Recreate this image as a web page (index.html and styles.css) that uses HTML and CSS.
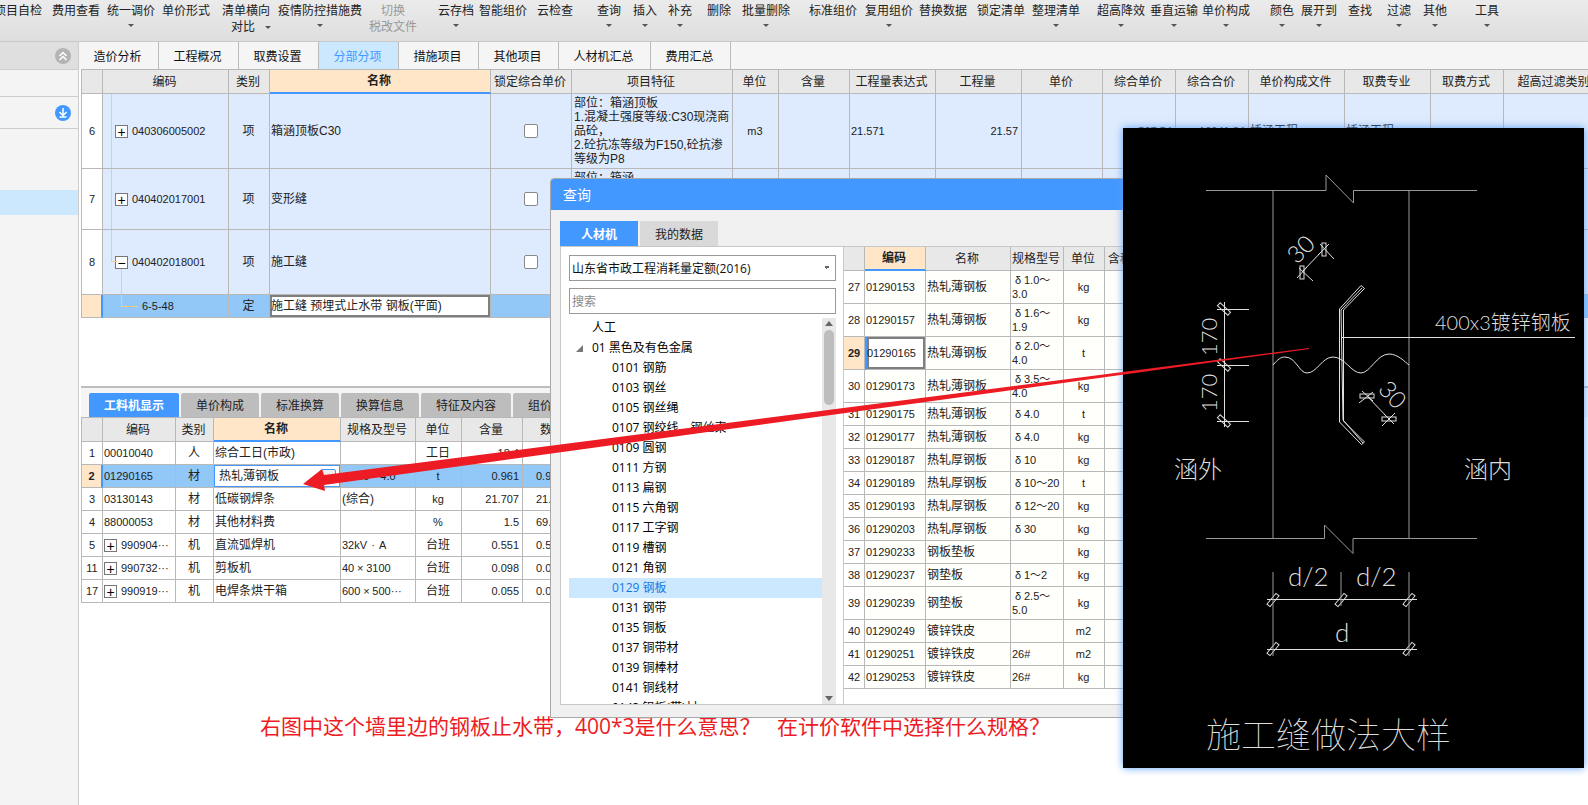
FILE: index.html
```html
<!DOCTYPE html>
<html lang="zh-CN">
<head>
    <meta charset="UTF-8">
    <meta name="viewport" content="width=device-width, initial-scale=1.0">
    <title>分部分项</title>
    <link rel="stylesheet" href="styles.css">
</head>
<body>

    <header class="toolbar">
        <button>项目自检</button>
        <button>费用查看</button>
        <button class="drop">统一调价</button>
        <button>单价形式</button>
        <button class="drop-side">清单横向<br><span>对比</span></button>
        <button class="drop">疫情防控措施费</button>
        <button disabled>切换<br>税改文件</button>
        <button class="drop">云存档</button>
        <button>智能组价</button>
        <button>云检查</button>
        <button class="drop">查询</button>
        <button class="drop">插入</button>
        <button class="drop">补充</button>
        <button>删除</button>
        <button class="drop">批量删除</button>
        <button>标准组价</button>
        <button class="drop">复用组价</button>
        <button>替换数据</button>
        <button>锁定清单</button>
        <button class="drop">整理清单</button>
        <button class="drop">超高降效</button>
        <button class="drop">垂直运输</button>
        <button class="drop">单价构成</button>
        <button class="drop">颜色</button>
        <button class="drop">展开到</button>
        <button>查找</button>
        <button class="drop">过滤</button>
        <button class="drop">其他</button>
        <button class="drop">工具</button>
    </header>

    <div class="main">
        <aside class="sidebar">
            <div class="side-head">
                <button class="round" aria-label="收起">
                    <svg width="16" height="16" viewBox="0 0 16 16"><circle cx="8" cy="8" r="8" fill="#b4b4b4"/><path d="M4.500 8L8 4.500L11.500 8M4.500 12L8 8.500L11.500 12" fill="none" stroke="#fff" stroke-width="1.500"/></svg>
                </button>
            </div>
            <div class="side-blank"></div>
            <div class="side-load">
                <button class="round" aria-label="下载">
                    <svg width="16" height="16" viewBox="0 0 16 16"><circle cx="8" cy="8" r="8" fill="#4398ff"/><path d="M8 3V10M4.500 7L8 10.500L11.500 7M4.500 12H11.500" fill="none" stroke="#fff" stroke-width="1.500"/></svg>
                </button>
            </div>
            <div class="side-current"></div>
        </aside>

        <div class="content">
            <nav class="tabs">
                <button>造价分析</button>
                <button>工程概况</button>
                <button>取费设置</button>
                <button class="active">分部分项</button>
                <button>措施项目</button>
                <button>其他项目</button>
                <button class="wide">人材机汇总</button>
                <button>费用汇总</button>
            </nav>

            <div class="bill">
                <table class="grid bill-grid">
                    <colgroup>
                        <col class="w21"><col class="w126"><col class="w41"><col class="w221"><col class="w81"><col class="w161">
                        <col class="w46"><col class="w71"><col class="w86"><col class="w86"><col class="w81"><col class="w73">
                        <col class="w73"><col class="w96"><col class="w86"><col class="w73"><col class="w102">
                    </colgroup>
                    <thead>
                        <tr>
                            <th></th><th>编码</th><th>类别</th><th class="picked">名称</th><th>锁定综合单价</th><th>项目特征</th>
                            <th>单位</th><th>含量</th><th>工程量表达式</th><th>工程量</th><th>单价</th><th>综合单价</th>
                            <th>综合合价</th><th>单价构成文件</th><th>取费专业</th><th>取费方式</th><th>超高过滤类别</th>
                        </tr>
                    </thead>
                    <tbody>
                        <tr class="row6">
                            <td class="no">6</td>
                            <td class="num tree"><button class="exp" aria-label="展开">+</button>040306005002</td>
                            <td class="mid">项</td>
                            <td>箱涵顶板C30</td>
                            <td class="mid"><input type="checkbox" aria-label="锁定综合单价"></td>
                            <td class="feature">部位：箱涵顶板<br>1.混凝土强度等级:C30现浇商<br>品砼，<br>2.砼抗冻等级为F150,砼抗渗<br>等级为P8</td>
                            <td class="mid num">m3</td>
                            <td></td>
                            <td class="num">21.571</td>
                            <td class="num end">21.57</td>
                            <td></td>
                            <td class="num end">507.54</td>
                            <td class="num end">10941.34</td>
                            <td>桥涵工程</td>
                            <td>桥涵工程</td>
                            <td></td>
                            <td></td>
                        </tr>
                        <tr class="row7">
                            <td class="no">7</td>
                            <td class="num tree"><button class="exp" aria-label="展开">+</button>040402017001</td>
                            <td class="mid">项</td>
                            <td>变形缝</td>
                            <td class="mid"><input type="checkbox" aria-label="锁定综合单价"></td>
                            <td class="feature">部位：箱涵</td>
                            <td></td><td></td><td></td><td></td><td></td><td></td><td></td><td></td><td></td><td></td><td></td>
                        </tr>
                        <tr class="row8">
                            <td class="no">8</td>
                            <td class="num tree last"><button class="exp" aria-label="收起">−</button>040402018001</td>
                            <td class="mid">项</td>
                            <td>施工缝</td>
                            <td class="mid"><input type="checkbox" aria-label="锁定综合单价"></td>
                            <td></td><td></td><td></td><td></td><td></td><td></td><td></td><td></td><td></td><td></td><td></td><td></td>
                        </tr>
                        <tr class="current">
                            <td class="no"></td>
                            <td class="num child">6-5-48</td>
                            <td class="mid">定</td>
                            <td class="cell-focus">施工缝 预埋式止水带 钢板(平面)</td>
                            <td></td><td></td><td></td><td></td><td></td><td></td><td></td><td></td><td></td><td></td><td></td><td></td><td></td>
                        </tr>
                    </tbody>
                </table>
            </div>

            <nav class="subtabs">
                <button class="active wide">工料机显示</button>
                <button>单价构成</button>
                <button>标准换算</button>
                <button>换算信息</button>
                <button class="wide">特征及内容</button>
                <button>组价方案</button>
            </nav>

            <table class="grid detail-grid">
                <colgroup>
                    <col class="w21"><col class="w73"><col class="w38"><col class="w127"><col class="w75"><col class="w46"><col class="w61"><col class="w61">
                </colgroup>
                <thead>
                    <tr><th></th><th>编码</th><th>类别</th><th class="picked">名称</th><th>规格及型号</th><th>单位</th><th>含量</th><th>数量</th></tr>
                </thead>
                <tbody>
                    <tr><td class="no">1</td><td class="num">00010040</td><td class="mid">人</td><td>综合工日(市政)</td><td></td><td class="mid">工日</td><td class="num end">18.4</td><td></td></tr>
                    <tr class="current"><td class="no">2</td><td class="num">01290165</td><td class="mid">材</td><td class="editing"><div class="editor">热轧薄钢板<button aria-label="更多">···</button></div></td><td class="num"><span class="sym">δ</span>2.0～4.0</td><td class="mid num">t</td><td class="num end">0.961</td><td class="num qty">0.961</td></tr>
                    <tr><td class="no">3</td><td class="num">03130143</td><td class="mid">材</td><td>低碳钢焊条</td><td>(综合)</td><td class="mid num">kg</td><td class="num end">21.707</td><td class="num qty">21.707</td></tr>
                    <tr><td class="no">4</td><td class="num">88000053</td><td class="mid">材</td><td>其他材料费</td><td></td><td class="mid num">%</td><td class="num end">1.5</td><td class="num qty">69.</td></tr>
                    <tr><td class="no">5</td><td class="num"><button class="exp" aria-label="展开">+</button>990904···</td><td class="mid">机</td><td>直流弧焊机</td><td class="num">32kV<span class="sym">·</span>A</td><td class="mid">台班</td><td class="num end">0.551</td><td class="num qty">0.551</td></tr>
                    <tr><td class="no">11</td><td class="num"><button class="exp" aria-label="展开">+</button>990732···</td><td class="mid">机</td><td>剪板机</td><td class="num">40<span class="sym">×</span>3100</td><td class="mid">台班</td><td class="num end">0.098</td><td class="num qty">0.098</td></tr>
                    <tr><td class="no">17</td><td class="num"><button class="exp" aria-label="展开">+</button>990919···</td><td class="mid">机</td><td>电焊条烘干箱</td><td class="num">600<span class="sym">×</span>500···</td><td class="mid">台班</td><td class="num end">0.055</td><td class="num qty">0.055</td></tr>
                </tbody>
            </table>
        </div>
    </div>

    <p class="note">右图中这个墙里边的钢板止水带，400*3是什么意思？&nbsp;&nbsp; 在计价软件中选择什么规格？</p>

    <section class="dialog">
        <h2>查询</h2>
        <nav class="dialog-tabs">
            <button class="active">人材机</button>
            <button>我的数据</button>
        </nav>
        <div class="panes">
            <div class="pane-left">
                <select aria-label="定额库"><option>山东省市政工程消耗量定额(2016)</option></select>
                <input type="text" placeholder="搜索" aria-label="搜索">
                <div class="tree-box">
                    <ul>
                        <li class="lv1">人工</li>
                        <li class="lv1 open">01 黑色及有色金属</li>
                        <li>0101 钢筋</li>
                        <li>0103 钢丝</li>
                        <li>0105 钢丝绳</li>
                        <li>0107 钢绞线、钢丝束</li>
                        <li>0109 圆钢</li>
                        <li>0111 方钢</li>
                        <li>0113 扁钢</li>
                        <li>0115 六角钢</li>
                        <li>0117 工字钢</li>
                        <li>0119 槽钢</li>
                        <li>0121 角钢</li>
                        <li class="selected">0129 钢板</li>
                        <li>0131 钢带</li>
                        <li>0135 铜板</li>
                        <li>0137 铜带材</li>
                        <li>0139 铜棒材</li>
                        <li>0141 铜线材</li>
                        <li>0143 铝板(带)材</li>
                    </ul>
                    <div class="scroll"><i class="up"></i><b></b><i class="down"></i></div>
                </div>
            </div>
            <div class="pane-right">
                <table class="grid query-grid">
                    <colgroup>
                        <col class="w21"><col class="w61"><col class="w85"><col class="w53"><col class="w41"><col class="w73">
                    </colgroup>
                    <thead>
                        <tr><th></th><th class="picked">编码</th><th>名称</th><th>规格型号</th><th>单位</th><th class="left">含税市场价</th></tr>
                    </thead>
                    <tbody>
                        <tr class="tall"><td class="no">27</td><td class="num">01290153</td><td>热轧薄钢板</td><td class="num"><span class="sym">δ</span>1.0～<br>3.0</td><td class="mid num">kg</td><td></td></tr>
                        <tr class="tall"><td class="no">28</td><td class="num">01290157</td><td>热轧薄钢板</td><td class="num"><span class="sym">δ</span>1.6～<br>1.9</td><td class="mid num">kg</td><td></td></tr>
                        <tr class="tall"><td class="no hot">29</td><td class="num cell-focus blue-left">01290165</td><td>热轧薄钢板</td><td class="num"><span class="sym">δ</span>2.0～<br>4.0</td><td class="mid num">t</td><td></td></tr>
                        <tr class="tall"><td class="no">30</td><td class="num">01290173</td><td>热轧薄钢板</td><td class="num"><span class="sym">δ</span>3.5～<br>4.0</td><td class="mid num">kg</td><td></td></tr>
                        <tr><td class="no">31</td><td class="num">01290175</td><td>热轧薄钢板</td><td class="num"><span class="sym">δ</span>4.0</td><td class="mid num">t</td><td></td></tr>
                        <tr><td class="no">32</td><td class="num">01290177</td><td>热轧薄钢板</td><td class="num"><span class="sym">δ</span>4.0</td><td class="mid num">kg</td><td></td></tr>
                        <tr><td class="no">33</td><td class="num">01290187</td><td>热轧厚钢板</td><td class="num"><span class="sym">δ</span>10</td><td class="mid num">kg</td><td></td></tr>
                        <tr><td class="no">34</td><td class="num">01290189</td><td>热轧厚钢板</td><td class="num"><span class="sym">δ</span>10～20</td><td class="mid num">t</td><td></td></tr>
                        <tr><td class="no">35</td><td class="num">01290193</td><td>热轧厚钢板</td><td class="num"><span class="sym">δ</span>12～20</td><td class="mid num">kg</td><td></td></tr>
                        <tr><td class="no">36</td><td class="num">01290203</td><td>热轧厚钢板</td><td class="num"><span class="sym">δ</span>30</td><td class="mid num">kg</td><td></td></tr>
                        <tr><td class="no">37</td><td class="num">01290233</td><td>钢板垫板</td><td></td><td class="mid num">kg</td><td></td></tr>
                        <tr><td class="no">38</td><td class="num">01290237</td><td>钢垫板</td><td class="num"><span class="sym">δ</span>1～2</td><td class="mid num">kg</td><td></td></tr>
                        <tr class="tall"><td class="no">39</td><td class="num">01290239</td><td>钢垫板</td><td class="num"><span class="sym">δ</span>2.5～<br>5.0</td><td class="mid num">kg</td><td></td></tr>
                        <tr><td class="no">40</td><td class="num">01290249</td><td>镀锌铁皮</td><td></td><td class="mid num">m2</td><td></td></tr>
                        <tr><td class="no">41</td><td class="num">01290251</td><td>镀锌铁皮</td><td class="num">26#</td><td class="mid num">m2</td><td></td></tr>
                        <tr><td class="no">42</td><td class="num">01290253</td><td>镀锌铁皮</td><td class="num">26#</td><td class="mid num">kg</td><td></td></tr>
                    </tbody>
                </table>
            </div>
        </div>
    </section>

    <figure class="drawing">
        <svg width="461" height="640" viewBox="0 0 461 640">
            <!-- 墙体轮廓 -->
            <g class="wall">
                <path d="M83 62.500H203V47L230.500 75V62.500H354"/>
                <path d="M83 410.500H201.500V397L230 425.500V410.500H354"/>
                <path d="M150 62V410M286 62V410"/>
            </g>
            <!-- 止水钢板 -->
            <g class="line">
                <path d="M216.500 181L238 157.500L241.500 160.500L220.500 182V293L241.500 314L238.500 316.500L216.500 294Z"/>
                <path d="M218 182L239 160M218 182L220 292L240 315"/>
                <path d="M219 209.500H452"/>
                <path d="M150 237C155 231 158 229 162 229C173 229 176 245 184 245C194 245 199 229 210 229C222 229 228 245 238 245C247 245 254 226 266 226C275 226 282 234 286 237"/>
            </g>
            <!-- 170 + 170 -->
            <g class="line">
                <path d="M101.500 174V299M94 181.500H126M94 237.500H126M94 293.500H126"/>
                <rect x="94" y="179" width="14" height="4" transform="rotate(42 101 181)"/>
                <rect x="94" y="235" width="14" height="4" transform="rotate(42 101 237)"/>
                <rect x="94" y="291" width="14" height="4" transform="rotate(42 101 293)"/>
            </g>
            <!-- 弯折 30 -->
            <g class="line">
                <path d="M179 144L201 121M176 140L190 153M197 116L211 131M174 150L184 139M195 127L206 116"/>
                <rect x="177" y="138" width="4" height="13"/>
                <rect x="199" y="115" width="4" height="13"/>
                <path d="M244 268L266 291M236 275L250 264M259 298L272 285M239 263L250 273M261 286L271 296"/>
                <rect x="237" y="266" width="14" height="4"/>
                <rect x="259" y="289" width="14" height="4"/>
            </g>
            <!-- 墙厚标注 -->
            <g class="line">
                <path d="M144 471.500H294M144 521.500H294"/>
                <rect x="143" y="470" width="14" height="4" transform="rotate(-50 150 472)"/>
                <rect x="211" y="470" width="14" height="4" transform="rotate(-50 218 472)"/>
                <rect x="279" y="470" width="14" height="4" transform="rotate(-50 286 472)"/>
                <rect x="143" y="519" width="14" height="4" transform="rotate(-50 150 521)"/>
                <rect x="279" y="519" width="14" height="4" transform="rotate(-50 286 521)"/>
            </g>
            <path class="wall" d="M150 444V528M286 444V528M218 444V478"/>
            <g class="label">
                <text class="t22" transform="translate(94 228) rotate(-90)">170</text>
                <text class="t22" transform="translate(94 284) rotate(-90)">170</text>
                <text class="t24" transform="translate(174 137) rotate(-45)">30</text>
                <text class="t24" transform="translate(254 262) rotate(48)">30</text>
                <text class="t20" x="312" y="202">400x3镀锌钢板</text>
                <text class="t24" x="51" y="350">涵外</text>
                <text class="t24" x="341" y="350">涵内</text>
                <text class="t26" x="165" y="458">d/2</text>
                <text class="t26" x="233" y="458">d/2</text>
                <text class="t26" x="212" y="514">d</text>
                <text class="t35" x="83" y="620">施工缝做法大样</text>
            </g>
        </svg>
    </figure>

    <svg class="pointer" width="1010" height="145" viewBox="0 0 1010 145">
        <path d="M3 137L22 122L24 128L1009 1V2L24 138L25 144Z" fill="#ed1c24"/>
    </svg>

</body>
</html>
```
FILE: styles.css
```css
* {
    box-sizing: border-box;
}
body {
    margin: 0;
    min-height: 100vh;
    display: flex;
    flex-direction: column;
    position: relative;
    overflow: hidden;
    background: #fff;
    color: #222;
    font-family: "Open Sans", "Noto Sans CJK SC", sans-serif;
    font-size: 12px;
}
button {
    margin: 0;
    padding: 0;
    border: none;
    background: none;
    color: inherit;
    font: inherit;
    white-space: nowrap;
}

/* 工具栏 */
.toolbar {
    display: grid;
    grid-template-columns: 58px 55px 55px 60px 56px 91px 69px 41px 58px 60px 36px 35px 39px 35px 67px 56px 54px 58px 55px 65px 53px 52px 68px 31px 47px 39px 36px 52px 24px;
    justify-items: start;
    align-items: start;
    height: 42px;
    padding-top: 3px;
    background: linear-gradient(#ebebeb, #dedede);
    border-bottom: 1px solid #c8c8c8;
}
.toolbar button {
    position: relative;
    margin-left: -6px;
    line-height: 16px;
}
.toolbar button:disabled {
    color: #999;
}
.drop::after, .drop-side::after {
    content: "";
    display: block;
    width: 0;
    margin: 5px auto 0;
    border: 3px solid transparent;
    border-top-color: #555;
    border-bottom: none;
}
.drop-side span {
    margin-right: 6px;
}
.drop-side::after {
    position: absolute;
    right: -1px;
    bottom: 6px;
}

.main {
    flex: 1;
    display: flex;
}

/* 左侧栏 */
.sidebar {
    width: 79px;
    flex: none;
    background: #f4f4f4;
    border-right: 1px solid #ccc;
}
.side-head, .side-load {
    display: flex;
    align-items: center;
    justify-content: flex-end;
    padding-right: 7px;
}
.side-head {
    height: 28px;
    background: #dfdfdf;
    border-bottom: 1px solid #d0d0d0;
}
.side-blank {
    height: 27px;
    border-bottom: 1px solid #ccc;
}
.side-load {
    height: 32px;
    border-bottom: 1px solid #ccc;
}
.side-current {
    height: 25px;
    margin-top: 61px;
    background: #cce8ff;
}
.round {
    width: 16px;
    height: 16px;
    line-height: 0;
}

/* 主内容 */
.content {
    flex: 1;
    min-width: 0;
    padding-left: 2px;
    overflow: hidden;
}
.tabs {
    display: flex;
    height: 27px;
    margin-left: -2px;
    background: #f5f5f5;
}
.tabs button {
    width: 80px;
    padding-right: 2px;
    border-right: 1px solid #bbb;
    color: #111;
}
.tabs .wide {
    width: 92px;
}
.tabs .active {
    background: #cce8ff;
    color: #4398ff;
}
.bill {
    height: 319px;
    overflow: hidden;
    border-bottom: 2px solid #bdbdbd;
}

/* 表格 */
.grid {
    table-layout: fixed;
    border-collapse: separate;
    border-spacing: 0;
    width: 0;
    border-top: 1px solid #b8b8b8;
    border-left: 1px solid #b8b8b8;
    font-family: "Liberation Sans", "Noto Sans CJK SC", sans-serif;
    line-height: 14px;
}
.grid th {
    height: 24px;
    padding: 0 2px 0 0;
    background: #e8e8e8;
    border-right: 1px solid #b8b8b8;
    border-bottom: 1px solid #b8b8b8;
    font-weight: normal;
    white-space: nowrap;
    overflow: hidden;
}
.grid td {
    height: 23px;
    padding: 0 2px 0 1px;
    border-right: 1px solid #b8b8b8;
    border-bottom: 1px solid #b8b8b8;
    white-space: nowrap;
    overflow: hidden;
}
.grid .picked {
    background: #ffe6c8;
    border-bottom: 2px solid #4398ff;
    font-weight: bold;
}
.grid .left {
    padding-left: 3px;
    text-align: left;
}
.grid .no {
    padding: 0;
    background: #fff;
    font-size: 11px;
    text-align: center;
}
.grid .num {
    font-size: 11px;
}
.grid .mid {
    text-align: center;
}
.grid .end {
    padding-right: 3px;
    text-align: right;
}
.grid .qty {
    padding-left: 13px;
}
.sym {
    display: inline-block;
    width: 12px;
    text-align: center;
}
.w21 { width: 21px; }
.w38 { width: 38px; }
.w41 { width: 41px; }
.w46 { width: 46px; }
.w53 { width: 53px; }
.w61 { width: 61px; }
.w71 { width: 71px; }
.w73 { width: 73px; }
.w75 { width: 75px; }
.w81 { width: 81px; }
.w85 { width: 85px; }
.w86 { width: 86px; }
.w96 { width: 96px; }
.w102 { width: 102px; }
.w126 { width: 126px; }
.w127 { width: 127px; }
.w161 { width: 161px; }
.w221 { width: 221px; }

.bill-grid td {
    background: #deeafd;
}
.bill-grid .row6 td { height: 75px; }
.bill-grid .row7 td { height: 61px; }
.bill-grid .row8 td { height: 65px; }
.grid .current td {
    background: #91c8f8;
}
.grid .current .no {
    background: #ffe6c8;
    border-right: 2px solid #4398ff;
    font-weight: bold;
}
.grid .current .cell-focus,
.grid td.cell-focus {
    background: #fff;
    box-shadow: inset 0 0 0 2px #7f7f7f;
}
.grid td.blue-left {
    border-left: 2px solid #4398ff;
    padding-left: 0;
}
.grid .hot {
    background: #ffe6c8;
    font-weight: bold;
}
.bill-grid .feature {
    padding-top: 2px;
    padding-left: 2px;
    vertical-align: top;
}

/* 编码树连线 */
.grid .tree {
    position: relative;
    padding-left: 12px;
}
.tree::before {
    content: "";
    position: absolute;
    left: 8px;
    top: 0;
    bottom: -1px;
    border-left: 1px solid #fbc987;
}
.tree.last::before {
    bottom: 50%;
    width: 5px;
    border-bottom: 1px solid #fbc987;
}
.tree.last::after {
    content: "";
    position: absolute;
    left: 18px;
    top: 39px;
    bottom: -1px;
    border-left: 1px solid #fbc987;
}
.grid .child {
    position: relative;
    padding-left: 39px;
}
.child::before {
    content: "";
    position: absolute;
    left: 18px;
    top: 0;
    width: 16px;
    height: 11px;
    border-left: 1px solid #fbc987;
    border-bottom: 1px solid #fbc987;
}
.exp {
    width: 13px;
    height: 13px;
    margin-right: 4px;
    border: 1px solid #777;
    background: #fff;
    color: #000;
    font-size: 14px;
    line-height: 10px;
    vertical-align: -2px;
}
.grid input {
    appearance: none;
    width: 14px;
    height: 14px;
    margin: 0;
    border: 1px solid #888;
    border-radius: 2px;
    background: #fff;
    vertical-align: middle;
}

/* 工料机 */
.subtabs {
    display: flex;
    gap: 2px;
    height: 29px;
    padding: 5px 0 0 8px;
    background: #f5f5f5;
}
.subtabs button {
    width: 78px;
    height: 24px;
    border-radius: 2px 2px 0 0;
    background: #bdbdbd;
}
.subtabs .wide {
    width: 90px;
}
.subtabs .active {
    background: #4398ff;
    color: #fff;
    font-weight: bold;
}
.grid .editing {
    padding: 0;
}
.editor {
    display: flex;
    justify-content: space-between;
    height: 22px;
    padding: 3px 3px 0 4px;
    border: 1px solid #4398ff;
    background: #fff;
}
.editor button {
    width: 15px;
    height: 12px;
    border: 1px solid #4398ff;
    border-radius: 2px;
    background: #eee;
    line-height: 8px;
}

.note {
    position: absolute;
    left: 260px;
    top: 711px;
    margin: 0;
    color: #ed1c24;
    font-size: 21px;
    line-height: 30px;
    white-space: nowrap;
}

/* 查询窗口 */
.dialog {
    position: absolute;
    left: 550px;
    top: 178px;
    width: 640px;
    border: 1px solid #a8a8a8;
    border-radius: 4px 4px 0 0;
    background: #f0f0f0;
    overflow: hidden;
}
.dialog h2 {
    height: 31px;
    margin: 0;
    padding-left: 12px;
    background: #4398ff;
    color: #fff;
    font-size: 14px;
    font-weight: normal;
    line-height: 32px;
}
.dialog-tabs {
    display: flex;
    gap: 2px;
    padding: 11px 0 0 9px;
}
.dialog-tabs button {
    width: 78px;
    height: 25px;
    background: #d9d9d9;
}
.dialog-tabs .active {
    background: #4398ff;
    color: #fff;
    font-weight: bold;
}
.panes {
    display: flex;
    height: 459px;
    margin: 0 9px 12px;
    border: 1px solid #c8c8c8;
    background: #fff;
}
.pane-left {
    width: 282px;
    flex: none;
    display: flex;
    flex-direction: column;
    padding: 8px 7px 0 8px;
}
.pane-left select, .pane-left input {
    width: 100%;
    height: 26px;
    margin: 0 0 7px;
    padding: 0 2px;
    border: 1px solid #999;
    border-radius: 0;
    background: #fff;
    color: #111;
    font: inherit;
}
.pane-left select {
    appearance: none;
    background: linear-gradient(135deg, #666 50%, transparent 50%) right 5px top 10px / 3px 3px no-repeat, linear-gradient(225deg, #666 50%, transparent 50%) right 8px top 10px / 3px 3px no-repeat, #fff;
}
.pane-left input {
    margin-bottom: 4px;
}
.pane-left input::placeholder {
    color: #888;
}
.tree-box {
    flex: 1;
    min-height: 0;
    display: flex;
}
.tree-box ul {
    flex: 1;
    margin: 0;
    padding: 0;
    list-style: none;
    overflow: hidden;
    color: #000;
}
.tree-box li {
    height: 20px;
    padding-left: 43px;
    line-height: 20px;
}
.tree-box .lv1 {
    padding-left: 23px;
}
.tree-box .open::before {
    content: "";
    float: left;
    margin: 7px 0 0 -16px;
    border-left: 7px solid transparent;
    border-bottom: 7px solid #777;
}
.tree-box .selected {
    background: #cce8ff;
    color: #1677e6;
}
.scroll {
    width: 14px;
    display: flex;
    flex-direction: column;
    align-items: center;
    padding: 3px 0;
    background: #e8e8e8;
}
.scroll i {
    border: 4px solid transparent;
}
.scroll .up {
    border-top: none;
    border-bottom: 5px solid #666;
}
.scroll .down {
    margin-top: auto;
    border-bottom: none;
    border-top: 5px solid #666;
}
.scroll b {
    width: 10px;
    height: 75px;
    margin-top: 4px;
    border-radius: 5px;
    background: #bdbdbd;
}
.pane-right {
    flex: 1;
    min-width: 0;
    border-left: 1px solid #c8c8c8;
}
.query-grid {
    border-top: none;
    border-left: none;
}
.query-grid td {
    background: #fffffb;
}
.query-grid .tall td {
    height: 33px;
}

/* 施工缝大样 */
.drawing {
    position: absolute;
    left: 1123px;
    top: 128px;
    margin: 0;
    background: #000;
    line-height: 0;
    box-shadow: 0 0 8px #5a9ff5;
}
.wall {
    fill: none;
    stroke: #999;
}
.line {
    fill: none;
    stroke: #e0e0e0;
}
.label {
    fill: #ddd;
    font-family: Lato, "Noto Sans CJK SC", sans-serif;
    font-weight: 300;
}
.t20 { font-size: 20px; }
.t22 { font-size: 22px; }
.t24 { font-size: 24px; }
.t26 { font-size: 26px; }
.t35 {
    font-size: 35px;
    font-weight: 100;
}

.pointer {
    position: absolute;
    left: 300px;
    top: 347px;
    pointer-events: none;
}
```
